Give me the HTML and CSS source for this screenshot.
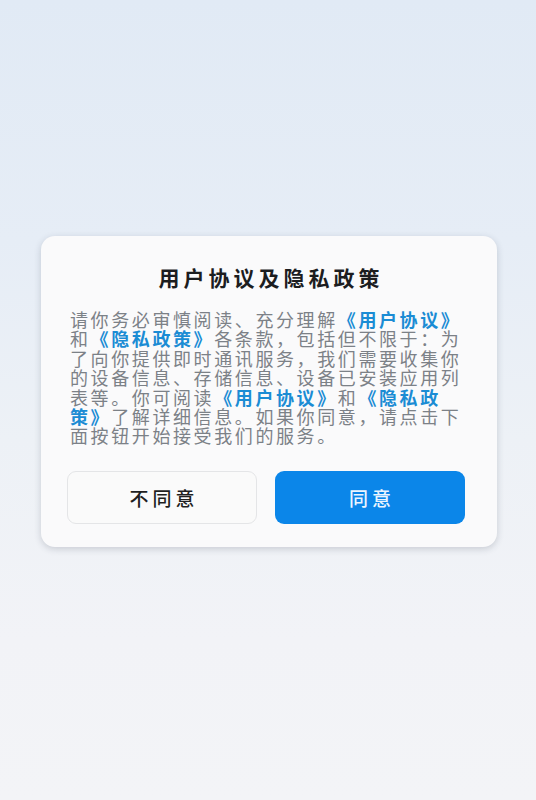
FILE: index.html
```html
<!DOCTYPE html>
<html lang="zh-CN">
<head>
<meta charset="utf-8">
<title>用户协议及隐私政策</title>
<link rel="stylesheet" href="styles.css">
</head>
<body>
<div class="page">
  <div class="dialog">
    <h1 class="title">用户协议及隐私政策</h1>
    <p class="body">请你务必审慎阅读、充分理解<span class="link">《用户协议》</span>和<span class="link">《隐私政策》</span>各条款，包括但不限于：为了向你提供即时通讯服务，我们需要收集你的设备信息、存储信息、设备已安装应用列表等。你可阅读<span class="link">《用户协议》</span>和<span class="link">《隐私政策》</span>了解详细信息。如果你同意，请点击下面按钮开始接受我们的服务。</p>
    <div class="actions">
      <button class="btn btn-decline">不同意</button>
      <button class="btn btn-accept">同意</button>
    </div>
  </div>
</div>
</body>
</html>
```
FILE: styles.css
```css
html, body {
  margin: 0;
  padding: 0;
}
body {
  width: 536px;
  height: 800px;
  overflow: hidden;
  font-family: "Noto Sans CJK SC", "Noto Sans", sans-serif;
  background: linear-gradient(180deg, #e1eaf5 0%, #e6edf6 30%, #edf1f6 55%, #f2f3f7 80%, #f3f4f7 100%);
}
.page {
  padding-top: 236px;
  padding-left: 41px;
}
.dialog {
  width: 456px;
  box-sizing: border-box;
  background: #fafafb;
  border-radius: 14px;
  box-shadow: 0 2px 7px rgba(40, 50, 70, 0.2);
  padding: 27px 0 23px;
}
.title {
  margin: 0 0 19px;
  text-align: center;
  font-size: 21px;
  line-height: 28px;
  font-weight: 700;
  letter-spacing: 4px;
  color: #1c1d1f;
  padding-left: 4px;
}
.body {
  margin: 0 0 0 29px;
  width: 400px;
  font-size: 18px;
  line-height: 19.4px;
  letter-spacing: 2.6px;
  color: #7c8187;
  line-break: strict;
}
.link {
  color: #1b8cd4;
  font-weight: 700;
}
.actions {
  display: flex;
  gap: 18px;
  margin: 25px 0 0 26px;
}
.btn {
  width: 190px;
  height: 53px;
  border-radius: 9px;
  font-family: "Noto Sans CJK SC", "Noto Sans", sans-serif;
  font-size: 19px;
  letter-spacing: 4px;
  padding: 0 0 0 4px;
  cursor: pointer;
}
.btn-decline {
  background: #fafafa;
  border: 1px solid #e4e5e7;
  color: #1f1f1f;
  font-weight: 500;
}
.btn-accept {
  background: #0b86e9;
  border: none;
  color: #eaf5ff;
  font-weight: 500;
}
```
